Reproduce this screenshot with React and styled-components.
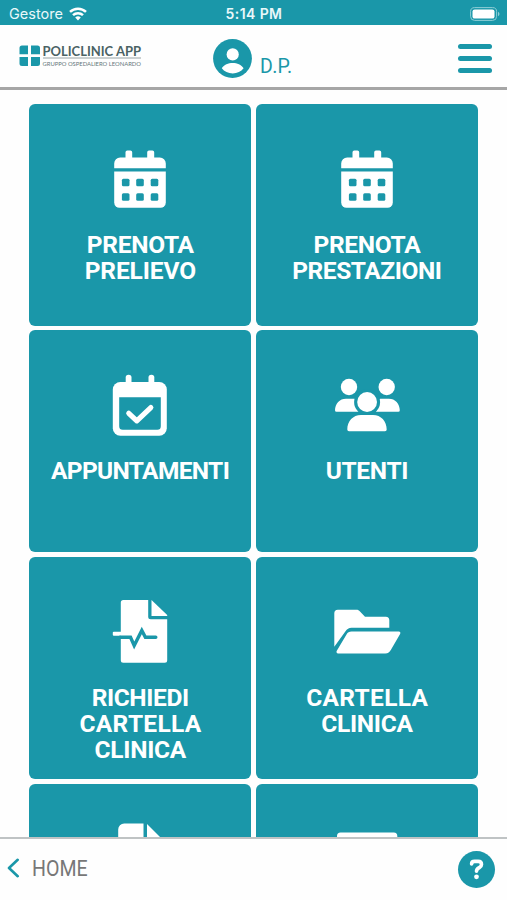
import React from 'react';
import styled, { createGlobalStyle } from 'styled-components';

const TEAL = '#1a97a9';

const CalendarIcon = () => (
  <TileIcon viewBox="0 0 72 70">
    <path d="M10.2 24.2V19.5a6 6 0 0 1 6-6h5.3V8.3a1.8 1.8 0 0 1 1.8-1.8h3.1a1.8 1.8 0 0 1 1.8 1.8v5.2h15V8.3A1.8 1.8 0 0 1 45 6.5h3.4a1.8 1.8 0 0 1 1.8 1.8v5.2h5.6a6 6 0 0 1 6 6v4.7z" />
    <path d="M10.2 27.5h51.6v31a5.3 5.3 0 0 1-5.3 5.3h-41a5.3 5.3 0 0 1-5.3-5.3z" />
    {[17.9, 32.2, 46.7].map((x) => (
      <g key={x} fill={TEAL}>
        <rect x={x} y="34.8" width="7.6" height="7.5" rx="1.5" />
        <rect x={x} y="49.2" width="7.6" height="7.5" rx="1.5" />
      </g>
    ))}
  </TileIcon>
);

const CalendarCheckIcon = () => (
  <TileIcon viewBox="0 0 72 70">
    <rect x="21.7" y="4.7" width="5.8" height="14" rx="2.8" />
    <rect x="44.5" y="4.7" width="5.8" height="14" rx="2.8" />
    <rect x="8.8" y="12" width="54" height="53.7" rx="7.5" />
    <path d="M15.2 27.3h41.6v28.9a3.5 3.5 0 0 1-3.5 3.5H18.7a3.5 3.5 0 0 1-3.5-3.5z" fill={TEAL} />
    <path d="M24.8 43.3l8 7.5 14-13.2" fill="none" stroke="#fff" strokeWidth="5.2" strokeLinecap="round" strokeLinejoin="round" />
  </TileIcon>
);

const UsersIcon = () => (
  <TileIcon viewBox="0 0 72 70">
    <circle cx="18" cy="17" r="8.2" />
    <circle cx="55.7" cy="17" r="8.2" />
    <path d="M5.5 41.8A1.5 1.5 0 0 1 4 40.3C4.2 33.5 8.5 28.7 15 28.7h7c2 0 3 .4 4 1v8l2 4.1z" />
    <path d="M67.3 41.8a1.5 1.5 0 0 0 1.5-1.5C68.6 33.5 64.3 28.7 57.8 28.7h-7c-2 0-3 .4-4 1v8l-2 4.1z" />
    <circle cx="36.1" cy="32" r="13" fill={TEAL} />
    <circle cx="36.1" cy="32" r="9.9" />
    <path d="M18 61.2a1.7 1.7 0 0 1-1.7-1.7C16.3 51 22 44.9 30 44.9h12c8 0 13.7 6.1 13.7 14.6a1.7 1.7 0 0 1-1.7 1.7z" />
  </TileIcon>
);

const FilePulseIcon = () => (
  <TileIcon viewBox="0 0 72 70">
    <path d="M19.3 3h24.9v16.8a2.5 2.5 0 0 0 2.5 2.5h16.5v40.9a2.5 2.5 0 0 1-2.5 2.5H19.3a2.5 2.5 0 0 1-2.5-2.5V5.5a2.5 2.5 0 0 1 2.5-2.5z" />
    <path d="M47.5 3l15.7 15.1v.9H47.5z" />
    <rect x="8.8" y="34.7" width="12" height="4" rx="1" />
    <path d="M16 40.3h10.5l3.7 8.2 7.6-15 3.6 6.8h10.4" fill="none" stroke={TEAL} strokeWidth="3.4" strokeLinecap="round" />
  </TileIcon>
);

const FolderIcon = () => (
  <TileIcon viewBox="0 0 72 70">
    <path d="M3.3 49.7V16.2a3.5 3.5 0 0 1 3.5-3.5h18.7c1.5 0 2.5.5 3.5 1.7l5 5.3h20.8a3.5 3.5 0 0 1 3.5 3.5v7.5H20.5c-2.7 0-4.5 1.2-6 3.5z" />
    <path d="M20.5 34.6h47.3c1.4 0 2 1.1 1.3 2.3l-9 15.6c-1.5 2.6-3 3.9-5.8 3.9H7.2c-1.6 0-2.2-1.2-1.4-2.6l9.7-16.3c1.2-2 2.7-2.9 5-2.9z" />
  </TileIcon>
);

const FileIcon = () => (
  <TileIcon viewBox="0 0 72 70">
    <path d="M14.2 5.5a6 6 0 0 1 6-6h19.3V19h18.7v45a4 4 0 0 1-4 4h-36a4 4 0 0 1-4-4z" />
    <path d="M43 0l15.5 15.5H43z" />
  </TileIcon>
);

const CardIcon = () => (
  <TileIcon viewBox="0 0 72 70">
    <rect x="6" y="8.6" width="60.3" height="50" rx="3.5" />
  </TileIcon>
);

// each line is its text and its letter-spacing
const tiles = [
  { icon: CalendarIcon, lines: [['PRENOTA', -0.3], ['PRELIEVO', -0.1]] },
  { icon: CalendarIcon, lines: [['PRENOTA', -0.3], ['PRESTAZIONI', -0.45]] },
  { icon: CalendarCheckIcon, lines: [['APPUNTAMENTI', -0.65]] },
  { icon: UsersIcon, lines: [['UTENTI', -0.3]] },
  { icon: FilePulseIcon, lines: [['RICHIEDI', -0.4], ['CARTELLA', 0.3], ['CLINICA', -0.3]] },
  { icon: FolderIcon, lines: [['CARTELLA', 0.3], ['CLINICA', -0.3]] },
  { icon: FileIcon, lines: [] },
  { icon: CardIcon, lines: [] },
];

const App = () => {
  return (
    <>
      <GlobalStyle />
      <Screen>
        <StatusBar>
          <Carrier>
            <span>Gestore</span>
            <svg width="18" height="14" viewBox="0 0 18 14">
              <g fill="none" stroke="#fff" strokeWidth="2.5">
                <path d="M1 4.9a11.6 11.6 0 0 1 16 0" />
                <path d="M4 8.2a7.2 7.2 0 0 1 10 0" />
              </g>
              <path d="M6.2 10.5a4 4 0 0 1 5.6 0L9 13.4z" fill="#fff" />
            </svg>
          </Carrier>
          <Clock>5:14 PM</Clock>
          <Battery>
            <svg width="30" height="14" viewBox="0 0 30 14">
              <rect x=".6" y=".6" width="26" height="12.8" rx="4" fill="none" stroke="#8fced6" />
              <rect x="2.5" y="2.4" width="22" height="9.2" rx="2.2" fill="#fff" />
              <path d="M28 4.8c2 .8 2 3.6 0 4.4z" fill="#8fced6" />
            </svg>
          </Battery>
        </StatusBar>

        <Header>
          <Logo viewBox="0 0 123 23">
            <g fill={TEAL}>
              <path d="M3 .5h6v8.7H.5V3A2.5 2.5 0 0 1 3 .5z" />
              <path d="M12 .5h6.5A2.5 2.5 0 0 1 21 3v6.2h-9z" />
              <path d="M.5 12H9v9H3a2.5 2.5 0 0 1-2.5-2.5z" />
              <path d="M12 12h9v6.5a2.5 2.5 0 0 1-2.5 2.5H12z" />
            </g>
            <text x="23.5" y="10.6" fontSize="14" fontWeight="700" fill="#4a6264" textLength="98.5" lengthAdjust="spacingAndGlyphs">POLICLINIC APP</text>
            <path d="M24 13h98" stroke="#8c9a9b" strokeWidth=".9" />
            <text x="23.5" y="20.5" fontSize="6.3" fontWeight="400" fill="#65777a" textLength="98.5" lengthAdjust="spacingAndGlyphs">GRUPPO OSPEDALIERO LEONARDO</text>
          </Logo>
          <User>
            <svg width="39" height="39" viewBox="0 0 39 39">
              <circle cx="19.5" cy="19.5" r="19.4" fill={TEAL} />
              <circle cx="19.7" cy="15.4" r="6.1" fill="#fff" />
              <path d="M8.8 29.3c2.2-3.7 6.5-5.3 10.9-5.3s8.7 1.6 10.9 5.3c-2.4 3.3-6.5 5.2-10.9 5.2s-8.5-1.9-10.9-5.2z" fill="#fff" />
            </svg>
            <Initials>D.P.</Initials>
          </User>
          <MenuButton aria-label="Menu">
            <Bar />
            <Bar />
            <Bar />
          </MenuButton>
        </Header>

        <Grid>
          {tiles.map(({ icon: Icon, lines }, i) => (
            <Tile key={i}>
              <Icon />
              {lines.map(([text, spacing]) => (
                <TileLine key={text} $spacing={spacing}>{text}</TileLine>
              ))}
            </Tile>
          ))}
        </Grid>

        <Footer>
          <BackLink>
            <svg width="13" height="20" viewBox="0 0 13 20">
              <path d="M10.7 1.8L2 10l8.7 8.2" fill="none" stroke={TEAL} strokeWidth="2.6" strokeLinecap="round" strokeLinejoin="round" />
            </svg>
            <BackText>HOME</BackText>
          </BackLink>
          <HelpButton aria-label="Aiuto">
            <svg width="15" height="21" viewBox="0 0 15 21">
              <path d="M2.6 5c0-1.7 1.2-2.6 3-2.6h3.6c2 0 3.3 1.3 3.3 3 0 1.6-.9 2.4-2.2 3.2-1.7 1-2.8 1.6-2.8 3.6" fill="none" stroke="#fff" strokeWidth="3.6" strokeLinecap="round" />
              <circle cx="7.5" cy="17.8" r="2.4" fill="#fff" />
            </svg>
          </HelpButton>
        </Footer>
      </Screen>
    </>
  );
};

const GlobalStyle = createGlobalStyle`
  * {
    box-sizing: border-box;
  }

  body {
    margin: 0;
    background: #fefefe;
    font-family: Roboto, sans-serif;
  }
`;

const Screen = styled.div`
  display: flex;
  flex-direction: column;
  width: 507px;
  height: 900px;
  overflow: hidden;
`;

const StatusBar = styled.div`
  display: grid;
  grid-template-columns: 1fr auto 1fr;
  align-items: center;
  flex: none;
  height: 25px;
  padding: 2px 7px 0 9px;
  background: ${TEAL};
  color: #e9f8fa;
  font-family: Inter, sans-serif;
`;

const Carrier = styled.div`
  display: flex;
  align-items: center;
  gap: 6px;
  font-size: 14.5px;
`;

const Clock = styled.div`
  margin-right: 1px;
  font-size: 14px;
  font-weight: 600;
  letter-spacing: 0.4px;
`;

const Battery = styled.div`
  display: flex;
  justify-content: flex-end;
`;

const Header = styled.header`
  display: flex;
  align-items: center;
  flex: none;
  height: 65px;
  padding: 0 15px 0 19px;
  border-bottom: 3px solid #a6a6a6;
`;

const Logo = styled.svg`
  width: 123px;
  height: 23px;
  overflow: visible;
  font-family: Lato, sans-serif;
`;

const User = styled.div`
  display: flex;
  align-items: center;
  gap: 8px;
  margin: 4px 0 0 71px;
`;

const Initials = styled.span`
  padding-top: 17px;
  color: ${TEAL};
  font-size: 19.5px;
  line-height: 22px;
  letter-spacing: 0.3px;
`;

const MenuButton = styled.button`
  display: flex;
  flex-direction: column;
  gap: 7px;
  margin: 4px 0 0 auto;
  padding: 0;
  border: none;
  background: none;
`;

const Bar = styled.span`
  width: 34px;
  height: 5px;
  border-radius: 3px;
  background: ${TEAL};
`;

const Grid = styled.main`
  display: grid;
  grid-template-columns: 222px 222px;
  grid-auto-rows: 222px;
  gap: 4.7px;
  flex: 1;
  min-height: 0;
  overflow: hidden;
  padding: 13.6px 0 0 29.4px;
`;

const Tile = styled.div`
  display: flex;
  flex-direction: column;
  align-items: center;
  padding-top: 40px;
  border-radius: 6px;
  background: ${TEAL};
`;

const TileIcon = styled.svg`
  flex: none;
  width: 72px;
  height: 70px;
  margin-bottom: 18px;
  fill: #fff;
  overflow: visible;
`;

const TileLine = styled.span`
  color: #fff;
  font-size: 24.5px;
  font-weight: 700;
  line-height: 26px;
  letter-spacing: ${({ $spacing }) => $spacing}px;
  margin-right: ${({ $spacing }) => -$spacing}px;
  white-space: nowrap;
`;

const Footer = styled.footer`
  display: flex;
  align-items: flex-start;
  justify-content: space-between;
  flex: none;
  height: 63px;
  padding: 12px 12px 0 7px;
  border-top: 2px solid #bfc3c4;
`;

const BackLink = styled.div`
  display: flex;
  align-items: center;
  gap: 12px;
  height: 33px;
`;

const BackText = styled.span`
  color: #777;
  font-size: 22.5px;
  transform: scaleX(0.87);
  transform-origin: left;
`;

const HelpButton = styled.button`
  display: flex;
  align-items: center;
  justify-content: center;
  width: 37px;
  height: 37px;
  padding: 0;
  border: none;
  border-radius: 50%;
  background: ${TEAL};
`;

export default App;
